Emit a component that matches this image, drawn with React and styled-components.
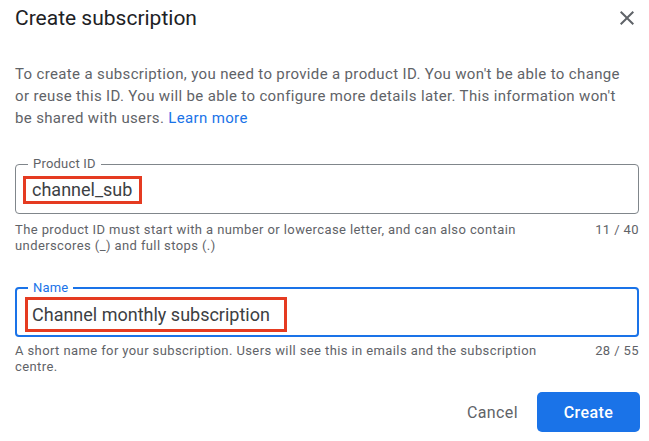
import React from "react";
import styled, { createGlobalStyle } from "styled-components";

const GlobalStyle = createGlobalStyle`
  body {
    margin: 0;
    background: #ffffff;
    font-family: Roboto, "Liberation Sans", Arial, sans-serif;
  }
`;

const Dialog = styled.div`
  width: 649px;
  height: 441px;
  box-sizing: border-box;
  padding: 0 10px 0 15px;
  background: #ffffff;
  overflow: hidden;
`;

const Header = styled.div`
  height: 36px;
  display: flex;
  align-items: center;
  justify-content: space-between;
`;

const Title = styled.h1`
  margin: 0;
  font-size: 21px;
  font-weight: 400;
  color: #202124;
`;

const CloseButton = styled.button`
  width: 24px;
  height: 24px;
  padding: 0;
  border: none;
  background: none;
  display: flex;
  align-items: center;
  justify-content: center;
  cursor: pointer;
  svg {
    fill: #5f6368;
  }
`;

const Intro = styled.p`
  margin: 27px 0 0;
  max-width: 615px;
  font-size: 15px;
  line-height: 22px;
  letter-spacing: 0.35px;
  color: #5f6368;
`;

const Link = styled.a`
  color: #1a73e8;
  text-decoration: none;
`;

const Field = styled.div`
  position: relative;
  height: 50px;
  box-sizing: border-box;
  margin-top: ${(p) => p.$top}px;
  border: ${(p) => (p.$focused ? "2px solid #1a73e8" : "1px solid #80868b")};
  border-radius: 4px;
  display: flex;
  align-items: center;
  padding-left: ${(p) => (p.$focused ? 8 : 7)}px;
`;

const FieldLabel = styled.span`
  position: absolute;
  top: -8px;
  left: ${(p) => (p.$focused ? 11 : 12)}px;
  padding: 0 5px;
  background: #ffffff;
  font-size: 13px;
  line-height: 14px;
  letter-spacing: 0.2px;
  color: ${(p) => (p.$focused ? "#1a73e8" : "#5f6368")};
`;

const Highlight = styled.span`
  display: inline-block;
  border: 3px solid #e53b21;
  padding: ${(p) => p.$pad};
  font-size: 18px;
  line-height: ${(p) => p.$line}px;
  color: #3c4043;
  margin-top: ${(p) => p.$shift}px;
`;

const HelperRow = styled.div`
  display: flex;
  justify-content: space-between;
  align-items: flex-start;
  margin-top: ${(p) => p.$top}px;
  font-size: 13px;
  line-height: 16px;
  letter-spacing: 0.4px;
  color: #5f6368;
`;

const HelperText = styled.div`
  max-width: 545px;
`;

const Counter = styled.div`
  white-space: nowrap;
`;

const Actions = styled.div`
  display: flex;
  justify-content: flex-end;
  align-items: center;
  gap: 11px;
  margin-top: 17px;
  margin-right: -1px;
`;

const TextButton = styled.button`
  height: 40px;
  padding: 0 8px;
  border: none;
  background: none;
  font-family: inherit;
  font-size: 16px;
  letter-spacing: 0.4px;
  color: #5f6368;
  cursor: pointer;
`;

const PrimaryButton = styled.button`
  height: 40px;
  width: 103px;
  border: none;
  border-radius: 5px;
  background: #1a73e8;
  font-family: inherit;
  font-size: 16px;
  font-weight: 500;
  letter-spacing: 0.4px;
  color: #ffffff;
  cursor: pointer;
`;

const CloseIcon = () => (
  <svg width="24" height="24" viewBox="0 0 24 24">
    <path d="M19 6.41L17.59 5 12 10.59 6.41 5 5 6.41 10.59 12 5 17.59 6.41 19 12 13.41 17.59 19 19 17.59 13.41 12z" />
  </svg>
);

const App = () => {
  return (
    <Dialog>
      <GlobalStyle />
      <Header>
        <Title>Create subscription</Title>
        <CloseButton aria-label="Close">
          <CloseIcon />
        </CloseButton>
      </Header>

      <Intro>
        To create a subscription, you need to provide a product ID. You won't
        be able to change or reuse this ID. You will be able to configure more
        details later. This information won't be shared with users.{" "}
        <Link href="#">Learn more</Link>
      </Intro>

      <Field $top={35}>
        <FieldLabel>Product ID</FieldLabel>
        <Highlight $pad="0 7px 0 6px" $line={22} $shift={2}>
          channel_sub
        </Highlight>
      </Field>
      <HelperRow $top={8}>
        <HelperText>
          The product ID must start with a number or lowercase letter, and can
          also contain underscores (_) and full stops (.)
        </HelperText>
        <Counter>11 / 40</Counter>
      </HelperRow>

      <Field $top={33} $focused>
        <FieldLabel $focused>Name</FieldLabel>
        <Highlight $pad="0 14px 0 4px" $line={29} $shift={4}>
          Channel monthly subscription
        </Highlight>
      </Field>
      <HelperRow $top={6}>
        <HelperText>
          A short name for your subscription. Users will see this in emails and
          the subscription centre.
        </HelperText>
        <Counter>28 / 55</Counter>
      </HelperRow>

      <Actions>
        <TextButton>Cancel</TextButton>
        <PrimaryButton>Create</PrimaryButton>
      </Actions>
    </Dialog>
  );
};

export default App;
